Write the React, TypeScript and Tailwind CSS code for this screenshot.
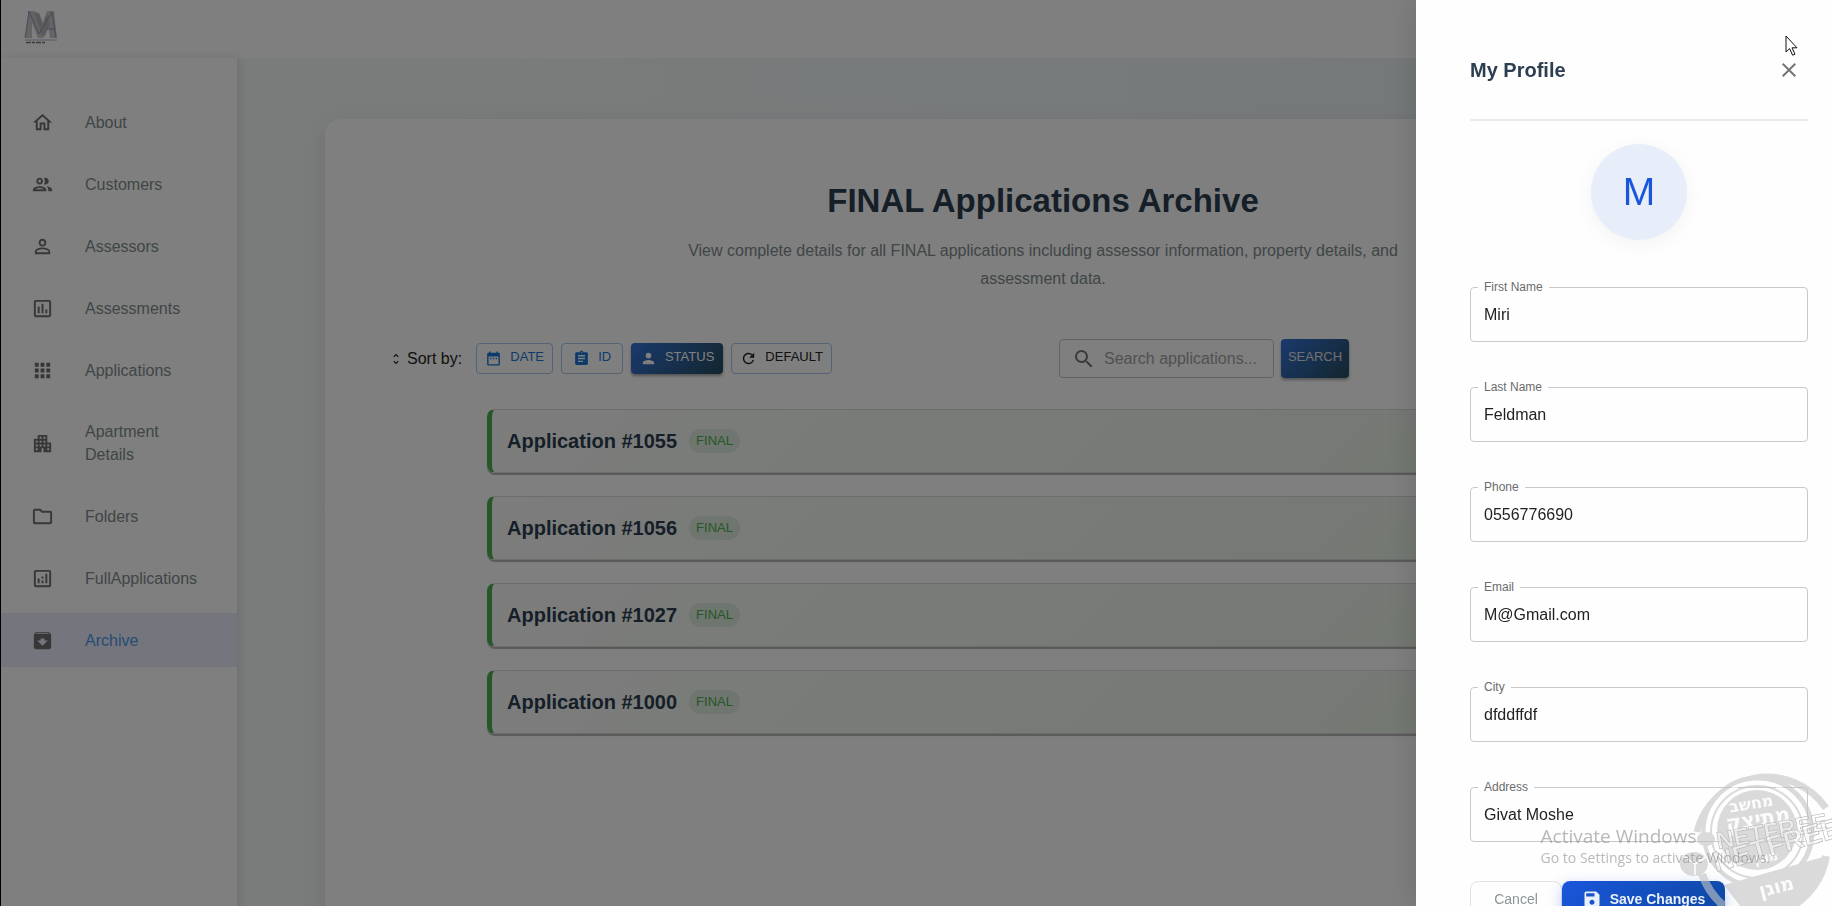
import { useId } from "react";
import type { ComponentType, ReactNode } from "react";
import {
  MdApartment,
  MdApps,
  MdArchive,
  MdAssignment,
  MdClose,
  MdDateRange,
  MdOutlineAnalytics,
  MdOutlineAssessment,
  MdOutlineFolder,
  MdOutlineHome,
  MdPerson,
  MdPersonOutline,
  MdRefresh,
  MdSave,
  MdSearch,
  MdUnfoldMore,
} from "react-icons/md";

type Icon = ComponentType<{ className?: string }>;
type NavItem = { label: string; icon: Icon; active?: boolean };

function PeopleIcon({ className }: { className?: string }) {
  return (
    <svg viewBox="0 0 24 24" fill="currentColor" className={className} aria-hidden="true">
      <path d="M9 13.75c-2.34 0-7 1.17-7 3.5V19h14v-1.75c0-2.33-4.66-3.5-7-3.5zM4.34 17c.84-.58 2.87-1.25 4.66-1.25s3.82.67 4.66 1.25H4.34zM9 12c1.93 0 3.5-1.57 3.5-3.5S10.93 5 9 5 5.5 6.57 5.5 8.5 7.07 12 9 12zm0-5c.83 0 1.5.67 1.5 1.5S9.83 10 9 10s-1.5-.67-1.5-1.5S8.17 7 9 7zm7.04 6.81c1.16.84 1.96 1.96 1.96 3.44V19h4v-1.75c0-2.02-3.5-3.17-5.96-3.44zM15 12c1.93 0 3.5-1.57 3.5-3.5S16.93 5 15 5c-.54 0-1.04.13-1.5.35.63.89 1 1.98 1 3.15s-.37 2.26-1 3.15c.46.22.96.35 1.5.35z" />
    </svg>
  );
}

const navItems: NavItem[] = [
  { label: "About", icon: MdOutlineHome },
  { label: "Customers", icon: PeopleIcon },
  { label: "Assessors", icon: MdPersonOutline },
  { label: "Assessments", icon: MdOutlineAssessment },
  { label: "Applications", icon: MdApps },
  { label: "Apartment Details", icon: MdApartment },
  { label: "Folders", icon: MdOutlineFolder },
  { label: "FullApplications", icon: MdOutlineAnalytics },
  { label: "Archive", icon: MdArchive, active: true },
];

const applications = ["1055", "1056", "1027", "1000"];

const profileFields = [
  { label: "First Name", value: "Miri" },
  { label: "Last Name", value: "Feldman" },
  { label: "Phone", value: "0556776690" },
  { label: "Email", value: "M@Gmail.com" },
  { label: "City", value: "dfddffdf" },
  { label: "Address", value: "Givat Moshe" },
];

function Logo() {
  return (
    <svg width="36" height="36" viewBox="0 0 36 36" aria-hidden="true">
      <path d="M6 2h6l6 17 6-17h7l3 27h-7l-2-14-5 14h-5L9 14 9 29H2z" fill="#c9c9cb" />
      <path d="M11 3l7 21 3-7-5-13z" fill="#b4b4b8" />
      <path d="M24 4l-7 20 4 4 6-12z" fill="#b4b4b8" />
      <path d="M2 29L6 2l10 23L29 3l4 26M24 20h8" fill="none" stroke="#8490b2" strokeWidth="0.9" />
      <path d="M2 31h32" stroke="#abb6cc" strokeWidth="1" />
      <path d="M3 33.500h19" stroke="#777" strokeWidth="1.4" strokeDasharray="5 1 3 1" />
    </svg>
  );
}

function Sidebar() {
  return (
    <nav className="z-10 w-[236px] shrink-0 bg-white pt-[37px] shadow-[2px_0_10px_rgba(60,60,120,0.14)]">
      <ul className="flex flex-col gap-2">
        {navItems.map(({ label, icon: ItemIcon, active }) => (
          <li key={label}>
            <a
              href="#"
              className={
                active
                  ? "flex min-h-[54px] items-center gap-[31px] bg-[#e8eafb] py-[15px] pr-8 pl-[30px] text-[#4d9be6]"
                  : "flex min-h-[54px] items-center gap-[31px] py-[15px] pr-8 pl-[30px] text-[#7f8c8d]"
              }
            >
              <ItemIcon className="size-[23px] shrink-0 text-[#6e6e6e]" />
              <span className="text-base leading-[23px]">{label}</span>
            </a>
          </li>
        ))}
      </ul>
    </nav>
  );
}

const sortStyles = {
  date: "w-[77px] border border-[#a5c8ea] text-[#1976d2]",
  id: "w-[62px] border border-[#a5c8ea] text-[#1976d2]",
  status: "w-[92px] bg-linear-135 from-[#3674dc] to-[#274b5e] text-white shadow-[0_2px_3px_rgba(0,0,0,0.35)]",
  reset: "w-[101px] border border-[#a5c8ea] text-[#222]",
};

function SortButton({ icon: ButtonIcon, children, kind }: { icon: Icon; children: ReactNode; kind: keyof typeof sortStyles }) {
  return (
    <button
      type="button"
      className={`flex h-[31px] items-center justify-center gap-2 rounded-[4px] text-[13px] ${sortStyles[kind]}`}
    >
      <ButtonIcon className="size-[17px]" />
      <span className="pb-[3px] leading-6">{children}</span>
    </button>
  );
}

function Toolbar() {
  return (
    <div className="flex max-w-[960px] items-center justify-between">
      <div className="flex items-center gap-2">
        <div className="mr-[6px] flex items-center gap-1 text-base text-[#222]">
          <MdUnfoldMore className="size-3.5" />
          <span>Sort by:</span>
        </div>
        <SortButton icon={MdDateRange} kind="date">DATE</SortButton>
        <SortButton icon={MdAssignment} kind="id">ID</SortButton>
        <SortButton icon={MdPerson} kind="status">STATUS</SortButton>
        <SortButton icon={MdRefresh} kind="reset">DEFAULT</SortButton>
      </div>
      <form className="flex items-center gap-[7px]">
        <label className="flex h-[39px] w-[215px] items-center gap-2 rounded-[4px] border border-[#c4c4c4] pr-1 pl-3">
          <MdSearch className="size-6 shrink-0 text-[#757575]" />
          <input
            type="text"
            aria-label="Search applications"
            placeholder="Search applications..."
            className="w-full min-w-0 bg-transparent text-base outline-none placeholder:text-[#a2a2a2]"
          />
        </label>
        <button
          type="button"
          className="h-[39px] w-[68px] rounded-[4px] bg-linear-135 from-[#3674dc] to-[#274b5e] pb-1 text-center text-[13px] text-[#e0e0e0] shadow-[0_2px_3px_rgba(0,0,0,0.35)]"
        >
          SEARCH
        </button>
      </form>
    </div>
  );
}

function ApplicationRow({ id }: { id: string }) {
  return (
    <li className="flex h-16 items-center gap-3 rounded-[8px] border border-l-[5px] border-[#d8dcd8] border-l-[#4caf50] bg-linear-135 from-[#f8faf8] to-[#e8f1e5] px-[15px] shadow-[0_2px_1px_rgba(0,0,0,0.3)]">
      <h2 className="text-[20px] leading-7 font-bold text-[#2c3e50]">Application #{id}</h2>
      <span className="rounded-full bg-[#dfeade] px-[7px] text-[13px] leading-6 text-[#4caf50]">FINAL</span>
    </li>
  );
}

function Archive() {
  return (
    <main className="flex-1 bg-linear-to-r from-[#f4f9f6] via-[#f0f6f6] to-[#e6eff4] pt-[61px] pr-[71px] pl-[88px]">
      <section className="min-h-screen rounded-2xl bg-white px-16 pt-14 shadow-[0_6px_24px_rgba(60,70,110,0.12)]">
        <h1 className="text-center text-[33px] leading-[52px] font-bold text-[#2c3e50]">FINAL Applications Archive</h1>
        <p className="mx-auto mt-[10px] max-w-[720px] text-center text-base leading-7 text-[#7f8c8d]">
          View complete details for all FINAL applications including assessor information, property details, and assessment data.
        </p>
        <div className="mt-[46px]">
          <Toolbar />
        </div>
        <ul className="mx-auto mt-[31px] flex max-w-[1112px] flex-col gap-[23px]">
          {applications.map((id) => (
            <ApplicationRow key={id} id={id} />
          ))}
        </ul>
      </section>
    </main>
  );
}

function ProfileField({ label, value }: { label: string; value: string }) {
  const id = useId();
  return (
    <div className="relative">
      <label htmlFor={id} className="absolute -top-2 left-2 bg-[#fefefe] px-[6px] text-[12px] leading-4 text-[#6b6b6b]">
        {label}
      </label>
      <input
        id={id}
        defaultValue={value}
        className="block h-[55px] w-full rounded-[4px] border border-[#c9c9c9] bg-transparent px-[13px] text-base text-[#222] outline-none"
      />
    </div>
  );
}

function ProfileDrawer() {
  return (
    <aside
      aria-label="My Profile"
      className="fixed inset-y-0 right-0 z-30 flex w-[416px] flex-col overflow-hidden bg-[#fefefe] pr-6 pl-[54px] shadow-[0_0_30px_2px_rgba(0,0,0,0.14)]"
    >
      <header className="flex h-[121px] shrink-0 items-center justify-between border-b-2 border-[#ececec] pt-5">
        <h2 className="text-[20px] leading-8 font-bold text-[#2c3e50]">My Profile</h2>
        <button type="button" aria-label="Close" className="mr-[7px] text-[#757575]">
          <MdClose className="size-6" />
        </button>
      </header>
      <div className="mx-auto mt-[23px] flex size-24 shrink-0 items-center justify-center rounded-full bg-[#e8eef9] text-[39px] text-[#1a56db] shadow-[0_4px_20px_rgba(0,0,0,0.05)]">
        M
      </div>
      <form className="mt-[47px] flex shrink-0 flex-col gap-[45px]">
        {profileFields.map((field) => (
          <ProfileField key={field.label} label={field.label} value={field.value} />
        ))}
        <div className="-mt-[6px] flex">
          <button type="button" className="h-10 w-[92px] rounded-[8px] border border-[#e2e2e2] pb-1 text-[14px] text-[#8b9596]">
            Cancel
          </button>
          <button
            type="button"
            className="flex h-10 w-[163px] items-center justify-center gap-2 rounded-[8px] bg-linear-135 from-[#1a56db] to-[#0d47a1] pb-1 text-[14px] font-bold text-[#e9f0fc] shadow-[0_4px_14px_rgba(26,86,219,0.3)]"
          >
            <MdSave className="size-5" />
            Save Changes
          </button>
        </div>
      </form>
    </aside>
  );
}

function ProtectionStamp() {
  return (
    <svg
      className="pointer-events-none fixed right-0 bottom-0 z-40"
      width="152"
      height="140"
      viewBox="0 0 152 140"
      aria-hidden="true"
    >
      <g opacity="0.62">
        <path
          d="M17 66A72 72 0 0 1 146 42"
          fill="none"
          stroke="#c4c4c4"
          strokeWidth="7"
        />
        <path d="M146 90A72 72 0 0 1 112 140M22 108A72 72 0 0 0 44 140" fill="none" stroke="#c4c4c4" strokeWidth="8" />
        <circle cx="78" cy="66" r="54" fill="none" stroke="#c4c4c4" strokeWidth="5" />
        <circle cx="77" cy="66" r="50" fill="none" stroke="#fff" strokeWidth="3" />
        <circle cx="77" cy="66" r="46" fill="none" stroke="#c4c4c4" strokeWidth="2" />
        <circle cx="77" cy="64" r="40" fill="#c4c4c4" />
        <path d="M44 119L143 91Q142 128 114 140H60Z" fill="#c4c4c4" />
        <ellipse cx="14" cy="98" rx="14" ry="12" fill="#c4c4c4" />
        <ellipse cx="26" cy="73" rx="9" ry="7" fill="#c4c4c4" />
        <path d="M4 90l11 8 11-7M15 98v11" fill="none" stroke="#fff" strokeWidth="1.5" />
      </g>
      <g
        fontFamily="'DejaVu Sans', sans-serif"
        fontWeight="bold"
        textAnchor="middle"
        fill="#fcfcfc"
      >
        <text x="72" y="43" fontSize="16" transform="rotate(-9 72 43)">מחשב</text>
        <text x="79" y="60" fontSize="21" transform="rotate(-9 79 60)">מתיצק</text>
        <text x="87" y="96" fontSize="13" transform="rotate(-12 87 96)">מוגן</text>
        <text x="98" y="127" fontSize="19" transform="rotate(-14 98 127)">מוגן</text>
      </g>
      <g fontFamily="'Liberation Sans', sans-serif" fill="#fff" fillOpacity="0.5" stroke="#bcbcbc" strokeWidth="0.7" fontWeight="bold">
        <text x="38" y="83" fontSize="24" transform="rotate(-10 38 83)">NETFREE</text>
        <text x="36" y="106" fontSize="28" transform="rotate(-16 36 106)">NETFREE</text>
      </g>
    </svg>
  );
}

function Pointer() {
  return (
    <svg className="pointer-events-none fixed top-[35px] right-[34px] z-50" width="13" height="22" viewBox="0 0 13 22" aria-hidden="true">
      <path d="M1 1v16l3.600-3.400 3 6.600 2.400-1-3-6.400H12z" fill="#fff" stroke="#111" strokeWidth="1" />
    </svg>
  );
}

export default function App() {
  return (
    <div className="h-screen overflow-hidden border-l border-black bg-white font-['Liberation_Sans',Arial,sans-serif]">
      <header className="flex h-[58px] items-center bg-white pb-1 pl-[22px]">
        <Logo />
      </header>
      <div className="flex min-h-screen">
        <Sidebar />
        <Archive />
      </div>
      <div className="fixed inset-y-0 right-0 left-px z-20 bg-black/50" />
      <ProfileDrawer />
      <ProtectionStamp />
      <div className="pointer-events-none fixed right-[62px] bottom-[38px] z-50 font-['Open_Sans','Noto_Sans',sans-serif] text-[#8a8a8a]/60">
        <p className="text-[19px] leading-6">Activate Windows</p>
        <p className="text-[14px] leading-5">Go to Settings to activate Windows.</p>
      </div>
      <Pointer />
    </div>
  );
}
